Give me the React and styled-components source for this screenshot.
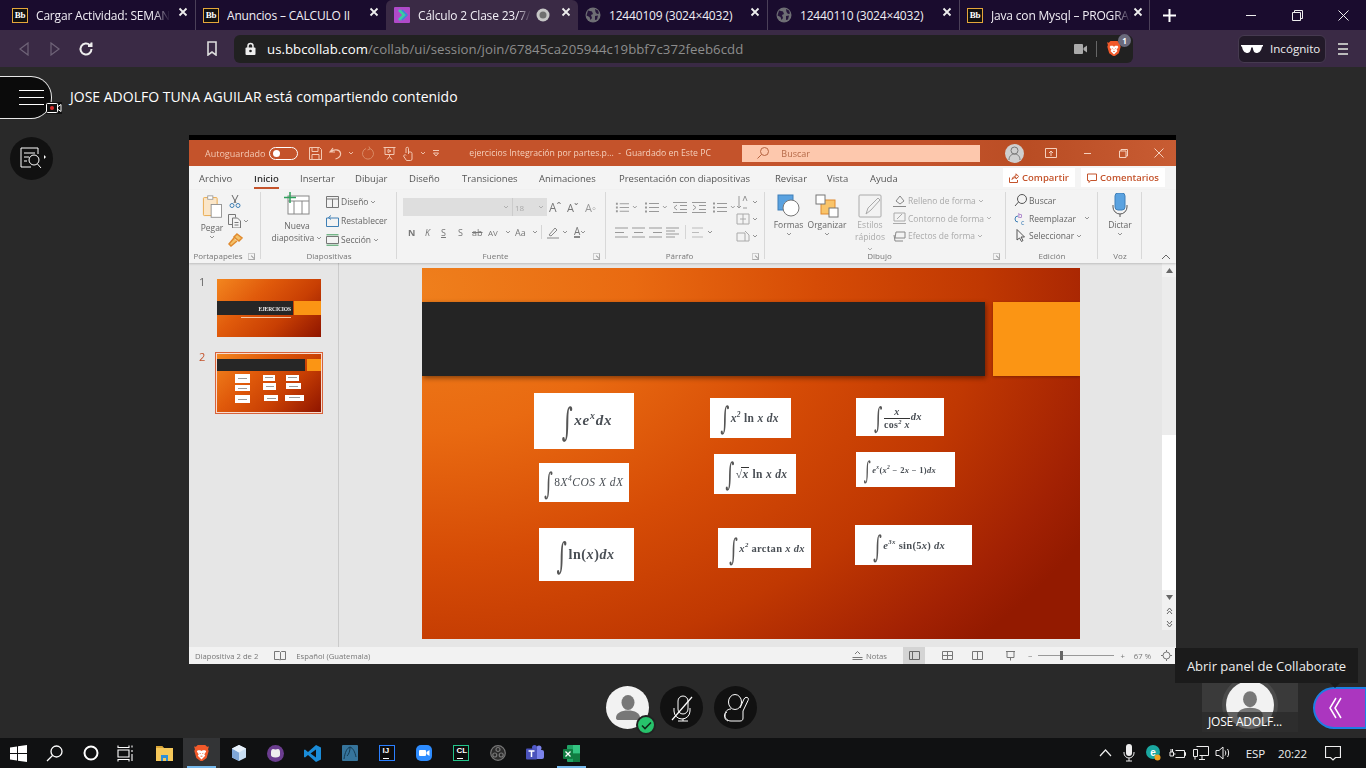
import React from 'react';
import styled, { createGlobalStyle } from 'styled-components';

const Global = createGlobalStyle`
  html, body { margin: 0; padding: 0; background: #292929; overflow: hidden; }
  * { box-sizing: border-box; }
  body { font-family: "Open Sans", "Noto Sans", sans-serif; }
`;

const Page = styled.div`
  width: 1366px; height: 768px; display: flex; flex-direction: column; overflow: hidden; background: #292929;
`;

/* ---------- browser chrome ---------- */
const TabStrip = styled.div`
  height: 30px; display: flex; background: #1a0c2e; color: #fff; flex: none;
`;
const Tab = styled.div`
  width: ${p => p.$w}px; height: 30px; display: flex; align-items: center; padding-left: ${p => p.$pl || 12}px; position: relative;
  background: ${p => p.$active ? '#3a2a45' : 'transparent'};
  border-radius: ${p => p.$active ? '6px 6px 0 0' : '0'};
  font-size: 12px; letter-spacing: -0.18px;
  border-right: ${p => p.$sep ? '1px solid #4b4058' : 'none'};
`;
const TabTitle = styled.span`
  margin-left: 8px; white-space: nowrap; overflow: hidden; width: ${p => p.$tw}px; color: #f1eef5;
  ${p => p.$fade && `mask-image: linear-gradient(90deg, #000 88%, transparent);`}
`;
const TabClose = styled.span`
  position: absolute; right: ${p => p.$r || 7}px; top: 7px; display: flex;
`;
const RecordingDot = styled.span`
  margin-left: 4px; display: flex;
`;
const Bb = styled.span`
  width: 16px; height: 15px; flex: none; background: #111; border: 1.5px solid #e4a63a; color: #fff; font: 700 9px "Liberation Serif", serif;
  display: flex; align-items: center; justify-content: center; letter-spacing: -.3px;
`;
const NewTab = styled.div`width: 38px; display: flex; align-items: center; justify-content: center;`;
const WinCtrls = styled.div`
  margin-left: auto; display: flex; align-items: center; height: 30px;
`;
const WinBtn = styled.div`width: 46px; display: flex; justify-content: center;`;

const Toolbar = styled.div`
  height: 37px; background: #3a2a45; display: flex; align-items: center; flex: none; color: #ddd; padding-left: 4px;
`;
const NavBtn = styled.div`
  width: ${p => p.$w}px; padding-left: ${p => p.$pl || 0}px; display: flex; justify-content: center; flex: none;
`;
const UrlBar = styled.div`
  width: 899px; height: 28px; background: #212121; border-radius: 6px; display: flex; align-items: center; padding-left: 11px; margin-left: 7px; flex: none;
`;
const UrlText = styled.div`
  margin-left: 11px; font-size: 13.2px; color: #8d8d8d; letter-spacing: .05px; flex: 1;
  b { color: #fff; font-weight: 400; }
`;
const UrlEnd = styled.div`
  display: flex; align-items: center; gap: 8px; padding-right: 12px; position: relative;
  i { width: 1px; height: 16px; background: #666; margin: 0 2px 0 1px; }
`;
const ShieldBadge = styled.span`
  position: absolute; right: 2px; top: -7px; width: 13px; height: 13px; border-radius: 50%; background: #6a6a7c; color: #fff; font-size: 8px; display: flex; align-items: center; justify-content: center; font-weight: 700;
`;
const Incognito = styled.div`
  width: 88px; height: 28px; margin-left: 105px; background: #221a29; border: 1px solid #463a50; border-radius: 6px; display: flex; align-items: center; gap: 7px; padding-left: 2px; font-size: 11.6px; color: #eee; flex: none;
`;
const MenuDots = styled.div`
  margin-left: 12px; width: 10px; display: flex; flex-direction: column; gap: 3px;
  i { display: block; height: 2px; background: #bbb; }
`;

/* ---------- collaborate page ---------- */
const Content = styled.div`
  flex: 1; min-height: 0; display: flex; flex-direction: column; padding-top: 9px; color: #fff;
`;
const Header = styled.div`
  height: 43px; display: flex; align-items: center; flex: none;
`;
const SessionMenu = styled.div`
  width: 52px; height: 43px; background: #0b0b0b; border: 1px solid #e8e8e8; border-left: none; border-radius: 0 21px 21px 0; position: relative; display: flex; flex-direction: column; gap: 6px; padding: 13px 0 0 19px;
  i { display: block; width: 25px; height: 1px; background: #fff; }
`;
const RecBadge = styled.span`
  position: absolute; right: -11px; bottom: 4px; display: flex; background: #111;
`;
const Presenter = styled.div`
  margin-left: 18px; padding-bottom: 2px; font-size: 14px; color: #fff; white-space: nowrap;
`;
const Stage = styled.div`
  margin-top: 16px; height: 529px; display: flex; flex: none;
`;
const Rail = styled.div`
  width: 189px; flex: none; padding: 2px 0 0 10px;
`;
const RoundBtn = styled.div`
  width: ${p => p.$s || 43}px; height: ${p => p.$s || 43}px; border-radius: 50%; background: #111; display: flex; align-items: center; justify-content: center; position: relative; flex: none;
`;
const Shared = styled.div`
  width: 987px; height: 529px; background: #000; padding-top: 5px; display: flex; flex-direction: column; filter: blur(.3px); font-family: "Open Sans", sans-serif;
`;

/* ---------- powerpoint title bar ---------- */
const PTitle = styled.div`
  height: 26px; flex: none; background: #c2522a; background-image: linear-gradient(90deg, #c4532b 0 75%, #b94d24 85%, #c85c33); display: flex; align-items: center; color: #f3c8b3; font-size: 9px; padding-left: 16px;
`;
const Toggle = styled.span`
  width: 29px; height: 13px; border-radius: 7px; border: 1.2px solid #fff; margin-left: 4px; position: relative; flex: none; 
  &::after { content: ''; position: absolute; left: 2.5px; top: 2px; width: 7px; height: 7px; background: #fff; border-radius: 50%; }
`;
const QuickTools = styled.div`
  display: flex; align-items: center; gap: 7px; margin-left: 11px; width: 160px; flex: none; color: #f3c8b3;
`;
const QuickIcon = styled.span`
  display: flex; margin-left: ${p => p.$ml || 0}px;
`;
const DocTitle = styled.div`
  width: 273px; flex: none; white-space: pre; color: #f5d0bd; font-size: 8.7px;
`;
const PSearch = styled.div`
  width: 238px; height: 17px; background: #fdc8ad; display: flex; align-items: center; padding-left: 15px; gap: 12px; color: #b56a48; flex: none;
`;
const PAvatar = styled.span`
  width: 19px; height: 19px; border-radius: 50%; background: #cfcfcf; margin-left: 25px; display: flex; align-items: center; justify-content: center; flex: none;
`;
const PWinBtns = styled.div`
  display: flex; align-items: center; margin-left: 9px;
  span { width: 36px; display: flex; justify-content: center; }
`;

/* ---------- ribbon ---------- */
const PTabs = styled.div`
  height: 24px; flex: none; background: #f4f4f4; display: flex; align-items: center; padding-left: 10px; position: relative; font-size: 9.5px; color: #555;
`;
const PTab = styled.span`
  width: ${p => p.$w}px; flex: none; height: 24px; display: flex; align-items: center; position: relative; white-space: nowrap;
  color: ${p => p.$on ? '#333' : '#555'}; font-weight: ${p => p.$on ? 600 : 400};
  ${p => p.$on && `&::after { content: ''; position: absolute; left: 0; width: 25px; bottom: 1px; height: 2px; background: #c4532b; }`}
`;
const Share = styled.span`
  position: absolute; top: 2px; left: ${p => p.$x}px; width: ${p => p.$w}px; height: 19px; background: #fff; color: #c4532b; display: flex; align-items: center; justify-content: center; gap: 3px; font-weight: 600; font-size: 9.5px;
`;
const Ribbon = styled.div`
  height: 73px; flex: none; background: #f3f3f3; display: flex; box-shadow: 0 1px 2px rgba(0,0,0,.18); position: relative; z-index: 1; color: #666; font-size: 8.5px;
`;
const Group = styled.div`
  width: ${p => p.$w}px; flex: none; position: relative; padding-top: 2px; 
  &::after { content: ''; position: absolute; right: 0; top: 2px; bottom: 4px; width: 1px; background: ${p => p.$nosep ? 'transparent' : '#d8d8d8'}; }
`;
const GroupBody = styled.div`
  display: flex; height: 56px; padding-left: ${p => p.$pl || 0}px; gap: ${p => p.$gap || 0}px;
`;
const GroupLabel = styled.div`
  text-align: center; font-size: 8px; color: #777; line-height: 12px; position: absolute; bottom: 1px; left: 0; right: ${p => p.$pr || 0}px;
`;
const Launcher = styled.span`
  position: absolute; right: 6px; bottom: 3px; width: 7px; height: 7px; border: 1px solid #aaa; border-top-color: #ccc; border-left-color: #ccc;
  &::after { content: ''; position: absolute; right: 0; bottom: 0; width: 4px; height: 1px; background: #999; transform: rotate(45deg); transform-origin: right; }
`;
const BigBtn = styled.div`
  width: ${p => p.$w}px; flex: none; display: flex; flex-direction: column; align-items: center; text-align: center; line-height: 12px; font-size: 8.5px; margin-left: ${p => p.$ml || 0}px; color: ${p => p.$dim ? '#aaa' : '#666'};
  > svg { margin-bottom: 3px; flex: none; }
`;
const Rows = styled.div`
  display: flex; flex-direction: column; justify-content: space-between; padding-top: ${p => p.$pt || 0}px; margin-left: ${p => p.$ml || 0}px; height: ${p => p.$h || 56}px;
`;
const RowItem = styled.div`
  display: flex; align-items: center; gap: 2px; height: 17px; white-space: nowrap; color: ${p => p.$dim ? '#aaa' : '#666'}; font-size: 8.5px;
`;
const FontInput = styled.span`
  height: 18px; background: #dedede; display: flex; align-items: center; justify-content: flex-end; width: ${p => p.$w}px; color: #aaa; padding-right: 3px; font-size: 8px;
`;
const Glyph = styled.span`
  color: ${p => p.$c || '#777'}; font-weight: ${p => p.$b ? 700 : 400}; width: ${p => p.$w ? `${p.$w}px` : 'auto'}; margin-left: ${p => p.$ml || 0}px; flex: none;
  font-style: ${p => p.$i ? 'italic' : 'normal'}; text-decoration: ${p => p.$u ? 'underline' : p.$s ? 'line-through' : 'none'}; font-size: ${p => p.$fs || 10}px; display: inline-flex; align-items: center;
`;
const FontRow = styled.div`
  display: flex; align-items: center; gap: ${p => p.$gap ?? 8}px; height: 18px; margin-top: ${p => p.$mt || 0}px; padding-left: ${p => p.$pl || 0}px;
`;
const Spaced = styled.span`
  margin-left: ${p => p.$ml || 0}px; display: flex;
`;
const VSep = styled.span`
  width: 1px; height: 14px; background: #d5d5d5; margin: ${p => p.$m};
`;
const ParaCol = styled.div`
  width: 121px; flex: none; display: flex; flex-direction: column;
`;
const Collapse = styled.div`
  position: absolute; right: 5px; bottom: 1px;
`;

/* ---------- editor ---------- */
const Editor = styled.div`
  flex: 1; min-height: 0; background: #e6e6e6; display: flex;
`;
const ThumbPane = styled.div`
  width: 150px; flex: none; border-right: 1px solid #cbcbcb; padding: 14px 0 0 10px; display: flex; flex-direction: column; gap: 13px;
`;
const ThumbRow = styled.div`
  display: flex; font-size: 11px; color: ${p => p.$on ? '#c4532b' : '#666'}; gap: 8px;
  > span { width: 8px; margin-top: -3px; }
`;
const ThumbFrame = styled.div`
  width: 108px; height: 62px; padding: 1px;
  border: 1px solid ${p => p.$on ? '#d8623a' : 'transparent'};
  background: ${p => p.$on ? '#f7dbcf' : 'transparent'};
`;
const ThumbSlide = styled.div`
  width: 104px; height: 58px; position: relative; overflow: hidden; display: block;
  background: linear-gradient(135deg, #f3861f 0%, #e05a0b 35%, #c83f03 65%, #8f1500 100%);
`;
const ThumbBar = styled.div`
  position: absolute; left: 0; top: ${p => p.$y}px; height: ${p => p.$h}px; width: ${p => p.$w}px; background: #262626; color: #eee; font: 700 5.5px "Liberation Serif", serif; text-align: right; padding: 5px 2px 0 0; letter-spacing: -.1px; white-space: nowrap;
`;
const ThumbAccent = styled.div`
  position: absolute; right: 0; top: ${p => p.$y}px; height: ${p => p.$h}px; width: ${p => p.$w}px; background: #fb9514;
`;
const ThumbSub = styled.div`
  position: absolute; left: 24px; top: 38px; width: 50px; height: 1px; background: #f5c5a0;
`;
const MiniCard = styled.div`
  position: absolute; left: ${p => p.$x}px; top: ${p => p.$y}px; width: ${p => p.$w}px; height: ${p => p.$h}px; background: #fff;
  &::after { content: ''; position: absolute; left: 20%; right: 20%; top: 45%; height: 1px; background: #9a9a9a; }
`;
const SlideArea = styled.div`
  flex: 1; min-width: 0; padding: 5px 0 0 83px;
`;
const Slide = styled.div`
  width: 658px; height: 371px; position: relative; overflow: hidden;
  background: radial-gradient(ellipse 115% 140% at 0% 5%, #ef7f1c 0%, #e96a11 28%, #d64c06 52%, #c03802 74%, #a22103 92%, #931a00 100%);
`;
const DarkBar = styled.div`
  position: absolute; left: 0; top: 34px; width: 563px; height: 74px; background: #242424; box-shadow: 1px 2px 5px rgba(0,0,0,.45);
`;
const Accent = styled.div`
  position: absolute; right: 0; top: 34px; width: 87px; height: 74px; background: #fb9514; box-shadow: 0 1px 3px rgba(0,0,0,.3);
`;
const Card = styled.div`
  position: absolute; left: ${p => p.$x}px; top: ${p => p.$y}px; width: ${p => p.$w}px; height: ${p => p.$h}px; background: #fff;
  display: flex; align-items: center; padding: 2px 0 0 ${p => p.$pl}px; color: #4a4f55;
`;
const Formula = styled.span`
  display: block; font: italic ${p => p.$wt || 700} ${p => p.$fs}px "Liberation Serif", serif; white-space: pre; letter-spacing: ${p => p.$ls ?? .3}px;
  sup { font-size: .65em; line-height: 0; vertical-align: super; }
`;
const Int = styled.span`
  display: inline-block; vertical-align: middle; font: 400 ${p => p.$s}px "DejaVu Serif", serif; line-height: 1; width: ${p => p.$s * .42}px; margin-right: ${p => p.$mr ?? 1}px; transform: scale(.62, 1.12); color: #555;
`;
const Frac = styled.span`
  display: inline-flex; flex-direction: column; align-items: center; vertical-align: middle; font-size: 10px; line-height: 11px; margin-right: 1px;
  span:first-child { border-bottom: 1px solid #333; width: 100%; text-align: center; padding-bottom: 1px; }
`;
const Root = styled.span`
  border-top: 1px solid #333; margin-left: -1px; padding: 0 1px; line-height: 1;
`;
const R = styled.em`font-style: normal;`;

const ScrollCol = styled.div`
  width: 14px; flex: none; background: #f1f1f1; display: flex; flex-direction: column; align-items: center; margin-bottom: 17px;
`;
const ScrollArrow = styled.span`
  height: ${p => p.$h || 12}px; display: flex; align-items: center; justify-content: center; flex: none;
`;
const ScrollTrack = styled.div`
  flex: 1; width: 100%; background: linear-gradient(#ececec 0 158px, #fff 158px);
`;
const StatusBar = styled.div`
  height: 17px; flex: none; background: #f2f2f2; display: flex; align-items: center; padding-left: 6px; font-size: 7.7px; color: #777;
`;
const StatusRight = styled.div`
  margin-left: auto; display: flex; align-items: center; padding-right: 4px; height: 17px;
`;
const ViewBtn = styled.span`
  width: ${p => p.$w || 31}px; height: 17px; display: flex; align-items: center; justify-content: center; flex: none; margin-left: ${p => p.$ml || 0}px;
  background: ${p => p.$on ? '#d4d4d4' : 'transparent'};
`;
const ZoomSlider = styled.span`
  width: 76px; height: 9px; position: relative; margin: 0 6px; display: block;
  &::before { content: ''; position: absolute; left: 0; right: 0; top: 4px; height: 1px; background: #999; }
  &::after { content: ''; position: absolute; left: 22px; top: 0; width: 3px; height: 9px; background: #666; }
`;

/* ---------- dock ---------- */
const Dock = styled.div`
  flex: 1; position: relative; display: flex;
`;
const DockCenter = styled.div`
  margin-left: 606px; margin-top: 22px; display: flex; gap: 11px; height: 43px;
`;
const AvatarBtn = styled.div`
  width: 43px; height: 43px; border-radius: 50%; background: #f2f2f2; position: relative; display: flex; align-items: center; justify-content: center;
`;
const Check = styled.span`
  position: absolute; right: -7px; bottom: -6px; width: 20px; height: 20px; border-radius: 50%; background: #27c26b; border: 2px solid #222; display: flex; align-items: center; justify-content: center;
`;
const DockRight = styled.div`
  margin-left: auto; display: flex; align-items: flex-start; gap: 15px; padding-top: 19px; position: relative;
`;
const Tile = styled.div`
  width: 96px; height: 49px; background: #3a3a3a; position: relative; overflow: hidden; display: flex; justify-content: center;
`;
const TileAvatar = styled.div`
  width: 48px; height: 48px; margin-top: -2px; border-radius: 50%; background: #f2f2f2; box-shadow: 0 0 0 4px #4a4a4a; display: flex; justify-content: center; align-items: center;
`;
const TileName = styled.div`
  position: absolute; left: 0; right: 0; bottom: 0; height: 20px; background: rgba(40,40,40,.72); color: #fff; font-size: 12px; letter-spacing: -.2px; padding-left: 6px; line-height: 20px; white-space: nowrap;
`;
const PanelBtn = styled.div`
  width: 53px; height: 42px; margin-top: 4px; background: #ab36bf; border: 2px solid #1c7fe3; border-right-width: 1px; border-radius: 21px 0 0 21px; display: flex; align-items: center; padding-left: 14px;
`;
const Tooltip = styled.div`
  position: absolute; right: 8px; top: -16px; width: 183px; height: 35px; background: #1b1b1b; color: #eee; font-size: 13px; display: flex; align-items: center; justify-content: center;
  &::after { content: ''; position: absolute; right: 17px; bottom: -5px; width: 0; height: 0; border-left: 6px solid transparent; border-right: 6px solid transparent; border-top: 6px solid #1b1b1b; }
`;

/* ---------- taskbar ---------- */
const Taskbar = styled.div`
  height: 30px; background: #101112; display: flex; align-items: center; flex: none; color: #eee; font-size: 11.5px;
`;
const TaskCell = styled.div`
  width: ${p => p.$w || 37}px; height: 30px; flex: none; display: flex; align-items: center; justify-content: center; position: relative;
  background: ${p => p.$on ? '#333436' : 'transparent'};
  ${p => p.$run && `&::after { content: ''; position: absolute; left: 4px; right: 4px; bottom: 0; height: 2px; background: #76b9ed; }`}
`;
const TaskGap = styled.span`width: 3px; flex: none;`;
const Tray = styled.div`
  margin-left: auto; display: flex; align-items: center; height: 30px; padding-right: 18px;
`;
const TrayCell = styled.div`
  width: ${p => p.$w}px; padding-left: ${p => p.$pl || 0}px; flex: none; display: flex; justify-content: center; align-items: center; white-space: nowrap; letter-spacing: -.1px;
`;
const SquareApp = styled.span`
  width: 16px; height: 16px; background: #0c0c0c; border: 1px solid ${p => p.$c}; color: #fff; font: 700 8px "Liberation Sans", sans-serif; display: flex; flex-direction: column; justify-content: space-between; padding: 1px 0 1px 3px; line-height: 8px;
  i { display: block; width: 6px; height: 1px; background: #fff; }
`;

/* ---------- icons ---------- */
const S = ({ w = 16, h = 16, vb, c = 'currentColor', sw = 1, fill = 'none', children }) => (
  <svg width={w} height={h} viewBox={vb || `0 0 ${w} ${h}`} fill={fill} stroke={c} strokeWidth={sw}>{children}</svg>
);
const Close = ({ c = '#eee', s = 10, sw = 1.8 }) => <S w={s} h={s} vb="0 0 10 10" c={c} sw={sw}><path d="M1.5 1.5l7 7M8.5 1.5l-7 7" /></S>;
const Globe = () => (
  <svg width="16" height="16" viewBox="0 0 16 16"><circle cx="8" cy="8" r="7.5" fill="#6e6e74" /><path d="M3 3.5l4 1 1 2.5-2 1 1 3-1.5 2-1-3-3-1.5zM10 2l3 1.5 1 3-2 .5-1.5-2zM10 9l3-.5-1 4-2 .5z" fill="#26163a" /></svg>
);
const Recording = () => (
  <svg width="16" height="16" viewBox="0 0 16 16"><circle cx="8" cy="8" r="6.5" fill="#c6c6c6" /><circle cx="8" cy="8" r="3.5" fill="#6f6f6f" /></svg>
);
const PlayFav = () => (
  <svg width="16" height="16" viewBox="0 0 16 16"><rect width="16" height="16" rx="1" fill="#b04ac9" /><path d="M5 3l5 5-5 5" fill="none" stroke="#35d0a0" strokeWidth="2.5" /><path d="M8 3l5 5-5 5" fill="none" stroke="#2f90d8" strokeWidth="1.5" /></svg>
);
const Brave = ({ s = 16 }) => (
  <svg width={s} height={s * 1.12} viewBox="0 0 16 18">
    <path d="M8 0h4l2 2 2-.5-1 3 .7 2L13.5 14 8 18 2.5 14 .3 6.500l.7-2-1-3L2 2l2-2z" fill="#f1592a" />
    <path d="M4 5.500h2.500L8 6.500 9.500 5.500H12l1 1.500-2 3 1 1.500-4 4-4-4 1-1.500-2-3z" fill="#fff" />
    <path d="M6 8.500l1 1M10 8.500l-1 1M7 12h2" stroke="#f1592a" strokeWidth="1" fill="none" />
  </svg>
);
const Chev = ({ c = '#888', s = 6 }) => <S w={s} h={s} vb="0 0 6 6" c={c} sw={.9}><path d="M1 2l2 2 2-2" /></S>;

const Lines = ({ n = 3, w = 13, c = '#999', align = 'l' }) => (
  <svg width={w} height="11" viewBox={`0 0 ${w} 11`} stroke={c} strokeWidth="1" fill="none">
    {Array.from({ length: n }).map((_, i) => {
      const y = 1 + i * (9 / Math.max(n - 1, 1));
      const short = i % 2 === 1;
      const l = align === 'r' && short ? 4 : align === 'c' && short ? 2 : 0;
      const r = align === 'l' && short ? w - 4 : align === 'c' && short ? w - 2 : w;
      return <path key={i} d={`M${l} ${y}H${r}`} />;
    })}
  </svg>
);
const Bullets = ({ c = '#999' }) => (
  <svg width="15" height="11" viewBox="0 0 15 11" stroke={c} fill="none"><path d="M5 1.500h10M5 5.500h10M5 9.500h10" /><path d="M1 1.500h2M1 5.500h2M1 9.500h2" strokeWidth="2" /></svg>
);
const Indent = ({ flip }) => (
  <svg width="14" height="11" viewBox="0 0 14 11" stroke="#999" fill="none"><path d="M0 .5h14M0 10.500h14M7 3.500h7M7 7.500h7" />{flip ? <path d="M1 3l3 2.500L1 8" /> : <path d="M4 3L1 5.500 4 8" />}</svg>
);
const DoubleArrow = ({ up }) => (
  <S w={7} h={8} c="#666"><path d={up ? 'M1 4l2.500-3L6 4M1 7l2.500-3L6 7' : 'M1 1l2.500 3L6 1M1 4l2.500 3L6 4'} /></S>
);
const SingleArrow = ({ up }) => (
  <svg width="7" height="5" viewBox="0 0 7 5" fill="#666"><path d={up ? 'M3.500 0L7 5H0z' : 'M3.500 5L7 0H0z'} /></svg>
);

const cards = [
  { x: 112, y: 125, w: 100, h: 56, pl: 25, fs: 15, ls: .8, s: 34, body: <>xe<sup>x</sup>dx</> },
  { x: 288, y: 130, w: 81, h: 40, pl: 8, fs: 11.500, s: 28, body: <>x<sup>2</sup><R> ln </R>x dx</> },
  { x: 434, y: 130, w: 88, h: 38, pl: 16, fs: 10.500, s: 26, body: <><Frac><span>x</span><span><R>cos</R><sup>2</sup> x</span></Frac>dx</> },
  { x: 117, y: 195, w: 90, h: 39, pl: 3, fs: 11.500, s: 27, wt: 400, ls: .5, body: <><R>8</R>X<sup>4</sup>COS X dX</> },
  { x: 292, y: 186, w: 82, h: 40, pl: 9, fs: 11.500, s: 28, body: <><R style={{ fontWeight: 400 }}>√</R><Root>x</Root><R> ln </R>x dx</> },
  { x: 434, y: 184, w: 99, h: 35, pl: 6, fs: 8.500, s: 22, body: <>e<sup>x</sup><R>(</R>x<sup>2</sup><R> − 2</R>x<R> − 1)</R>dx</> },
  { x: 117, y: 260, w: 95, h: 53, pl: 15, fs: 14, ls: .6, s: 32, body: <><R>ln(</R>x<R>)</R>dx</> },
  { x: 296, y: 260, w: 93, h: 40, pl: 9, fs: 10.500, s: 27, body: <>x<sup>2</sup><R> arctan </R>x dx</> },
  { x: 433, y: 257, w: 117, h: 40, pl: 16, fs: 10.500, s: 27, body: <>e<sup>3x</sup><R> sin(5</R>x<R>)</R> dx</> },
];

const Thumb = ({ children, bar, accent }) => (
  <ThumbSlide>
    <ThumbBar $y={bar.y} $h={bar.h} $w={bar.w}>{bar.t}</ThumbBar>
    <ThumbAccent $y={accent.y} $h={accent.h} $w={accent.w} />
    {children}
  </ThumbSlide>
);

const Person = ({ s = 30, c = '#777' }) => (
  <svg width={s} height={s} viewBox="0 0 30 30"><ellipse cx="15" cy="9.500" rx="6.500" ry="7.500" fill={c} /><path d="M3 25c0-5 5-7.500 12-7.500S27 20 27 25c0 1.500-1 2-2.500 2h-19C4 27 3 26.500 3 25z" fill={c} /></svg>
);

export default function App() {
  return (
    <Page>
      <Global />
      <TabStrip>
        <Tab $w={196} $sep><Bb>Bb</Bb><TabTitle $tw={134} $fade>Cargar Actividad: SEMANA</TabTitle><TabClose><Close /></TabClose></Tab>
        <Tab $w={190} $pl={7}><Bb>Bb</Bb><TabTitle $tw={130}>Anuncios – CALCULO II</TabTitle><TabClose><Close /></TabClose></Tab>
        <Tab $w={192} $active $pl={8}><PlayFav /><TabTitle $tw={113} $fade>Cálculo 2 Clase 23/7/2020</TabTitle><RecordingDot><Recording /></RecordingDot><TabClose $r={7}><Close /></TabClose></Tab>
        <Tab $w={190} $sep $pl={7}><Globe /><TabTitle $tw={135}>12440109 (3024×4032)</TabTitle><TabClose><Close /></TabClose></Tab>
        <Tab $w={192} $sep $pl={8}><Globe /><TabTitle $tw={135}>12440110 (3024×4032)</TabTitle><TabClose><Close /></TabClose></Tab>
        <Tab $w={190} $sep $pl={7}><Bb>Bb</Bb><TabTitle $tw={140} $fade>Java con Mysql – PROGRAMA</TabTitle><TabClose $r={6}><Close /></TabClose></Tab>
        <NewTab><S w={13} h={13} c="#fff" sw={2}><path d="M6.500 0v13M0 6.500h13" /></S></NewTab>
        <WinCtrls>
          <WinBtn><S w={10} h={10} c="#eee"><path d="M0 5.500h10" /></S></WinBtn>
          <WinBtn><S w={11} h={11} c="#eee"><path d="M2.500 2.500v-2h8v8h-2M.5 2.500h8v8h-8z" /></S></WinBtn>
          <WinBtn><S w={11} h={11} c="#eee"><path d="M.5.500l10 10M10.500.500l-10 10" /></S></WinBtn>
        </WinCtrls>
      </TabStrip>

      <Toolbar>
        <NavBtn $w={38}><S w={11} h={14} c="#6f6478" sw={1.2}><path d="M10 1L2 7l8 6z" /></S></NavBtn>
        <NavBtn $w={26}><S w={11} h={14} c="#6f6478" sw={1.2}><path d="M1 1l8 6-8 6z" /></S></NavBtn>
        <NavBtn $w={36}><S w={16} h={16} c="#eee" sw={2}><path d="M13.500 8a5.500 5.500 0 1 1-1.600-3.900" /><path d="M13.500 1.500v3.500H10" fill="#eee" /></S></NavBtn>
        <NavBtn $w={123} $pl={93}><S w={12} h={15} c="#ddd" sw={1.6}><path d="M2 1h8v13l-4-3-4 3z" /></S></NavBtn>
        <UrlBar>
          <svg width="11" height="13" viewBox="0 0 11 13"><path d="M3 6V4a2.500 2.500 0 0 1 5 0v2" fill="none" stroke="#eee" strokeWidth="1.500" /><rect x=".5" y="5.500" width="10" height="7.500" rx="1" fill="#eee" /><circle cx="5.500" cy="9" r="1.300" fill="#212121" /></svg>
          <UrlText><b>us.bbcollab.com</b>/collab/ui/session/join/67845ca205944c19bbf7c372feeb6cdd</UrlText>
          <UrlEnd>
            <svg width="13" height="10" viewBox="0 0 13 10" fill="#aaa"><rect width="9" height="10" rx="1" /><path d="M9.500 4L13 1.500v7L9.500 6z" /></svg>
            <i />
            <Brave s={14} />
            <ShieldBadge>1</ShieldBadge>
          </UrlEnd>
        </UrlBar>
        <Incognito>
          <svg width="22" height="10" viewBox="0 0 22 10" fill="#fff"><path d="M0 1h22v1.500h-1C20.500 7 18 9 15.500 9 13 9 12 6 11.800 3.500h-1.600C10 6 9 9 6.500 9 4 9 1.500 7 1 2.500H0z" /></svg>
          <span>Incógnito</span>
        </Incognito>
        <MenuDots><i /><i /><i /></MenuDots>
      </Toolbar>

      <Content>
        <Header>
          <SessionMenu>
            <i /><i /><i />
            <RecBadge>
              <svg width="16" height="12" viewBox="0 0 16 12" fill="none" stroke="#fff"><rect x=".5" y="1.500" width="11" height="9" rx="1" /><path d="M12 4.500l3-2v7l-3-2" /><circle cx="6" cy="6" r="2" fill="#e02b2b" stroke="none" /></svg>
            </RecBadge>
          </SessionMenu>
          <Presenter>JOSE ADOLFO TUNA AGUILAR está compartiendo contenido</Presenter>
        </Header>

        <Stage>
          <Rail>
            <RoundBtn>
              <svg width="28" height="28" viewBox="0 0 28 28" fill="none" stroke="#fff" strokeWidth="1"><path d="M20 9V3H3v19h10" /><path d="M6 8h11M6 12h5M6 16h3" /><circle cx="16" cy="15" r="5" /><path d="M19.500 19l3.500 4" /><path d="M26 10l2 2-2 2z" fill="#fff" stroke="none" /></svg>
            </RoundBtn>
          </Rail>
          <Shared>
            <PTitle>
              <span>Autoguardado</span>
              <Toggle />
              <QuickTools>
                <S w={13} h={13} c="#f3c8b3"><path d="M.5.500h10l2 2v10H.5zM3 .5v4h6v-4M3 12.500v-5h7v5" /></S>
                <S w={15} h={13} c="#f3c8b3" sw={1.2}><path d="M4 1L1 5h5M1.500 5c3-3 9-3 10 1 .6 3-2 5-5 6" /></S>
                <QuickIcon $ml={-3}><Chev c="#f3c8b3" /></QuickIcon>
                <QuickIcon $ml={-1}><S w={14} h={14} c="#d98a66" sw={1}><path d="M10 2.500a5.500 5.500 0 1 1-4 0M9 .5l1 2.500-2.500 1" /></S></QuickIcon>
                <QuickIcon $ml={2}><S w={13} h={14} c="#f3c8b3"><path d="M.5 1.500h12M2 1.500v7h9v-7M6.500 8.500v2M4 13.500l2.500-3 2.500 3" /><path d="M5 3.500l3 1.500-3 1.500z" /></S></QuickIcon>
                <QuickIcon $ml={-1}><S w={11} h={15} c="#f3c8b3"><path d="M4 7V2.500a1.200 1.200 0 0 1 2.500 0V8M6.500 6h2a1.500 1.500 0 0 1 1.500 1.500V13a1.500 1.500 0 0 1-1.500 1.500h-4L1.500 10 3 8.500 4 9.500" /></S></QuickIcon>
                <Chev c="#f3c8b3" />
                <QuickIcon $ml={-1}><S w={8} h={8} c="#f3c8b3"><path d="M1 1.500h6M1.500 4l2.500 3 2.500-3z" /></S></QuickIcon>
              </QuickTools>
              <DocTitle>ejercicios Integración por partes.p...  -  Guardado en Este PC</DocTitle>
              <PSearch>
                <S w={12} h={12} c="#b5623f"><circle cx="7.500" cy="4.500" r="4" /><path d="M4.500 7.500L.5 11.500" /></S>
                <span>Buscar</span>
              </PSearch>
              <PAvatar><S w={13} h={14} c="#777"><circle cx="6.500" cy="4.500" r="3.500" /><path d="M1 14c0-4 2.500-6 5.500-6s5.500 2 5.500 6" /></S></PAvatar>
              <PWinBtns>
                <span><S w={12} h={10} c="#f5d0bd"><path d="M.5.500h11v9H.5zM6 8V3M4 5l2-2 2 2" /></S></span>
                <span><S w={9} h={9} c="#f5d0bd"><path d="M1 4.500h7" /></S></span>
                <span><S w={9} h={9} c="#f5d0bd"><path d="M2 2V.5h6.500V7H7M.5 2h6.500v6.500H.5z" /></S></span>
                <span><S w={10} h={10} c="#f5d0bd"><path d="M.5.500l9 9M9.500.500l-9 9" /></S></span>
              </PWinBtns>
            </PTitle>

            <PTabs>
              <PTab $w={55}>Archivo</PTab>
              <PTab $w={46} $on>Inicio</PTab>
              <PTab $w={55}>Insertar</PTab>
              <PTab $w={54}>Dibujar</PTab>
              <PTab $w={53}>Diseño</PTab>
              <PTab $w={77}>Transiciones</PTab>
              <PTab $w={80}>Animaciones</PTab>
              <PTab $w={156}>Presentación con diapositivas</PTab>
              <PTab $w={52}>Revisar</PTab>
              <PTab $w={43}>Vista</PTab>
              <PTab $w={40}>Ayuda</PTab>
              <Share $x={814} $w={72}><S w={10} h={10} c="#c4532b"><path d="M.5 4.500v5h8V7M3 6.500c.5-2.500 2.500-3.500 4-3.500V.8L9.700 3.500 7 6V4.500c-1.500 0-3 .500-4 2z" /></S>Compartir</Share>
              <Share $x={892} $w={84}><S w={10} h={10} c="#c4532b"><path d="M.5 1h9v6.500h-6L2 9.500v-2H.5z" /></S>Comentarios</Share>
            </PTabs>

            <Ribbon>
              <Group $w={72}>
                <GroupBody $pl={10}>
                  <BigBtn $w={26}>
                    <svg width="22" height="24" viewBox="0 0 24 28" fill="none" style={{ marginTop: 3 }}><rect x="2" y="3" width="16" height="21" rx="1" fill="#fbe6c8" stroke="#e6a33e" /><rect x="7" y="1" width="6" height="4" fill="#fff" stroke="#999" /><rect x="11" y="11" width="12" height="15" fill="#fff" stroke="#8a8a8a" /></svg>
                    <span>Pegar</span>
                    <Chev />
                  </BigBtn>
                  <Rows $ml={3} $h={55} $pt={2}>
                    <S w={14} h={14} c="#3e7fb5"><path d="M4 1l4 8M10 1L6 9" stroke="#666" /><circle cx="4" cy="11.500" r="2" /><circle cx="10" cy="11.500" r="2" /></S>
                    <RowItem><S w={13} h={14} c="#777"><path d="M.5.5h7v3M.5.5v10h3.500M4.500 4h5l3 3v7h-8zM6.500 8.500h4M6.500 11h4" /></S><Chev /></RowItem>
                    <S w={15} h={14} c="#e08a2f" sw={1.500}><path d="M9 1l5 4-3 3-5-4zM6 5L1 11l2 2 6-5" fill="#f3c26a" /></S>
                  </Rows>
                </GroupBody>
                <GroupLabel $pr={14}>Portapapeles</GroupLabel>
                <Launcher />
              </Group>

              <Group $w={136}>
                <GroupBody $pl={7}>
                  <BigBtn $w={58}>
                    <svg width="26" height="24" viewBox="0 0 26 24" fill="none" stroke="#888"><rect x="4" y="4" width="21" height="18" fill="#fff" /><path d="M4 9h21M10 9v13M18 9v13" /><path d="M6 0v11M0 5.500h12" stroke="#2fa05c" strokeWidth="1.500" /></svg>
                    <span style={{ marginTop: 1 }}>Nueva</span>
                    <span>diapositiva <Chev /></span>
                  </BigBtn>
                  <Rows $pt={1}>
                    <RowItem><S w={13} h={12} c="#777"><path d="M.5.5h12v11H.5zM.5 3h12M6.500 3v8.500" /></S><span>Diseño</span><Chev /></RowItem>
                    <RowItem><S w={13} h={12} c="#3e7fb5"><path d="M.5 3h12v8.500H.5zM5 .5L2.500 2.500 5 4.500" /></S><span>Restablecer</span></RowItem>
                    <RowItem><S w={13} h={12} c="#777"><path d="M.5 2.500h12v7H.5z" /><path d="M.5.8h12M.5 11.200h12" stroke="#3e9a5a" /></S><span>Sección</span><Chev /></RowItem>
                  </Rows>
                </GroupBody>
                <GroupLabel>Diapositivas</GroupLabel>
              </Group>

              <Group $w={209}>
                <GroupBody style={{ flexDirection: 'column', paddingLeft: 6 }}>
                  <FontRow $gap={0} $mt={6}>
                    <FontInput $w={109}><Chev c="#aaa" /></FontInput>
                    <FontInput $w={35} style={{ borderLeft: '1px solid #ccc', justifyContent: 'space-between', paddingLeft: 2 }}>18<Chev c="#aaa" /></FontInput>
                    <Glyph $fs={12} $ml={2} $w={18}>Aˆ</Glyph>
                    <Glyph $fs={11} $w={18}>Aˇ</Glyph>
                    <Glyph $fs={11} $c="#999">A◦</Glyph>
                  </FontRow>
                  <FontRow $gap={0} $mt={7} $pl={5}>
                    <Glyph $b $fs={9} $w={17}>N</Glyph>
                    <Glyph $i $fs={9} $w={16}>K</Glyph>
                    <Glyph $u $fs={9} $w={17}>S</Glyph>
                    <Glyph $fs={9} $w={14}>S</Glyph>
                    <Glyph $s $fs={9} $w={16}>ab</Glyph>
                    <Glyph $fs={8} $w={17}>AV</Glyph>
                    <Chev />
                    <Glyph $fs={9} $w={17} $ml={4}>Aa</Glyph>
                    <Chev />
                    <VSep $m="0 4px 0 3px" />
                    <S w={14} h={13} c="#888"><path d="M3 9l6-7 2 2-6 6zM1 12h12" /></S>
                    <Spaced $ml={2}><Chev /></Spaced>
                    <Glyph $fs={10} $ml={6} style={{ borderBottom: '2px solid #888', lineHeight: '10px' }}>A</Glyph>
                    <Chev />
                  </FontRow>
                </GroupBody>
                <GroupLabel $pr={12}>Fuente</GroupLabel>
                <Launcher />
              </Group>

              <Group $w={159}>
                <GroupBody $pl={9}>
                  <ParaCol>
                    <FontRow $gap={3} $mt={6}>
                      <Bullets /><Chev />
                      <Spaced $ml={3}><Bullets /></Spaced><Chev />
                      <Spaced $ml={3}><Indent /></Spaced>
                      <Spaced $ml={2}><Indent flip /></Spaced>
                      <Spaced $ml={3}><Bullets /></Spaced><Chev />
                    </FontRow>
                    <FontRow $gap={4} $mt={7}>
                      <Lines /><Lines align="c" /><Lines align="r" /><Lines n={4} />
                      <VSep $m="0 2px" />
                      <Lines w={11} c="#bbb" /><Chev />
                    </FontRow>
                  </ParaCol>
                  <Rows $h={52} $pt={1}>
                    <RowItem><S w={14} h={14} c="#999"><path d="M3 1v12M1 11l2 2 2-2" /><path d="M9 1l-2 5M9 1l2 5M7 13h4" /></S><Chev /></RowItem>
                    <RowItem><S w={14} h={13} c="#aaa"><path d="M1 2h12v10H1zM7 2v10M4 7h6" /></S><Chev /></RowItem>
                    <RowItem><S w={14} h={12} c="#aaa"><path d="M1 3h8v8H1zM9 1l4 4v6H9" /></S><Chev /></RowItem>
                  </Rows>
                </GroupBody>
                <GroupLabel $pr={12}>Párrafo</GroupLabel>
                <Launcher />
              </Group>

              <Group $w={241}>
                <GroupBody $pl={7}>
                  <BigBtn $w={33}>
                    <svg width="24" height="24" viewBox="0 0 24 24" style={{ marginTop: 2, marginBottom: 1 }}><rect x="1" y="1" width="15" height="15" fill="#5aa2e0" stroke="#3f7fb8" /><circle cx="14" cy="14" r="8" fill="#fff" stroke="#777" /></svg>
                    <span>Formas</span>
                    <Chev />
                  </BigBtn>
                  <BigBtn $w={40} $ml={2}>
                    <svg width="24" height="24" viewBox="0 0 24 24" style={{ marginTop: 2, marginBottom: 1 }}><rect x="6" y="6" width="14" height="14" fill="#f9c46a" stroke="#e08a2f" /><rect x="1" y="1" width="9" height="9" fill="#fff" stroke="#777" /><rect x="14" y="14" width="9" height="9" fill="#fff" stroke="#777" /></svg>
                    <span>Organizar</span>
                    <Chev />
                  </BigBtn>
                  <BigBtn $w={34} $ml={6} $dim>
                    <svg width="24" height="24" viewBox="0 0 24 24" fill="none" stroke="#aaa" style={{ marginTop: 2, marginBottom: 1 }}><rect x="1" y="1" width="22" height="22" rx="1" /><path d="M8 20l2-6 10-10 2 2-9 10z" /></svg>
                    <span>Estilos</span>
                    <span>rápidos <Chev c="#aaa" /></span>
                  </BigBtn>
                  <Rows $ml={6} $h={52}>
                    <RowItem $dim><S w={13} h={12} c="#aaa"><path d="M3 6l4-5 4 5-4 3zM0 11.500h13" stroke="#888" /></S><span>Relleno de forma</span><Chev c="#aaa" /></RowItem>
                    <RowItem $dim><S w={13} h={12} c="#aaa"><path d="M1 1h11v8H1zM4 7l5-5M0 11.500h13" /></S><span>Contorno de forma</span><Chev c="#aaa" /></RowItem>
                    <RowItem $dim><S w={13} h={12} c="#888"><path d="M3 2h9v6H2zM1 5l1 6h8" /></S><span>Efectos de forma</span><Chev c="#aaa" /></RowItem>
                  </Rows>
                </GroupBody>
                <GroupLabel $pr={12}>Dibujo</GroupLabel>
                <Launcher />
              </Group>

              <Group $w={92}>
                <GroupBody $pl={8}>
                  <Rows $h={52}>
                    <RowItem><S w={13} h={13} c="#555"><circle cx="8" cy="5" r="4.500" /><path d="M4.500 8L1 12" /></S><span>Buscar</span></RowItem>
                    <RowItem><S w={13} h={13} c="#3e7fb5"><text x="4" y="6" fontSize="7" fill="#8a4fb8" stroke="none">b</text><text x="7" y="13" fontSize="7" fill="#3e7fb5" stroke="none">c</text><path d="M4 4a3 3 0 1 0 0 6" /></S><span>Reemplazar</span><Spaced $ml={6}><Chev /></Spaced></RowItem>
                    <RowItem><S w={13} h={13} c="#555"><path d="M3 .5v10.500l2.500-2 2 3.500 1.500-1-2-3.500h3.500z" /></S><span>Seleccionar</span><Chev /></RowItem>
                  </Rows>
                </GroupBody>
                <GroupLabel>Edición</GroupLabel>
              </Group>

              <Group $w={44}>
                <GroupBody>
                  <BigBtn $w={44}>
                    <svg width="16" height="25" viewBox="0 0 16 25" style={{ marginTop: 1, marginBottom: 1 }}><rect x="3" y="0" width="10" height="17" rx="3" fill="#5aa2e0" stroke="#3f7fb8" /><path d="M1 12v2a7 7 0 0 0 14 0v-2M8 21v3" fill="none" stroke="#555" /></svg>
                    <span>Dictar</span>
                    <Chev />
                  </BigBtn>
                </GroupBody>
                <GroupLabel>Voz</GroupLabel>
              </Group>

              <Collapse><S w={10} h={7} c="#666"><path d="M1 6l4-4 4 4" /></S></Collapse>
            </Ribbon>

            <Editor>
              <ThumbPane>
                <ThumbRow><span>1</span>
                  <ThumbFrame>
                    <Thumb bar={{ y: 22, h: 14, w: 76, t: 'EJERCICIOS' }} accent={{ y: 22, h: 14, w: 27 }}><ThumbSub /></Thumb>
                  </ThumbFrame>
                </ThumbRow>
                <ThumbRow $on><span>2</span>
                  <ThumbFrame $on>
                    <Thumb bar={{ y: 5, h: 12, w: 88, t: '' }} accent={{ y: 5, h: 12, w: 14 }}>
                      {cards.map((c, i) => (
                        <MiniCard key={i} $x={c.x * .158} $y={c.y * .158} $w={c.w * .158} $h={c.h * .158} />
                      ))}
                    </Thumb>
                  </ThumbFrame>
                </ThumbRow>
              </ThumbPane>
              <SlideArea>
                <Slide>
                  <DarkBar />
                  <Accent />
                  {cards.map((c, i) => (
                    <Card key={i} $x={c.x} $y={c.y} $w={c.w} $h={c.h} $pl={c.pl}>
                      <Formula $fs={c.fs} $wt={c.wt} $ls={c.ls}><Int $s={c.s}>∫</Int>{c.body}</Formula>
                    </Card>
                  ))}
                </Slide>
              </SlideArea>
              <ScrollCol>
                <ScrollArrow $h={14}><SingleArrow up /></ScrollArrow>
                <ScrollTrack />
                <ScrollArrow $h={14}><SingleArrow /></ScrollArrow>
                <ScrollArrow $h={13}><DoubleArrow up /></ScrollArrow>
                <ScrollArrow $h={13}><DoubleArrow /></ScrollArrow>
              </ScrollCol>
            </Editor>

            <StatusBar>
              <span>Diapositiva 2 de 2</span>
              <Spaced $ml={16}><S w={12} h={10} c="#777"><path d="M.5.5h5l1 1 1-1h4v8h-5l-.500.700-.500-.700h-5zM6.500 1.500v7" /></S></Spaced>
              <Spaced $ml={10}>Español (Guatemala)</Spaced>
              <StatusRight>
                <S w={11} h={9} c="#777"><path d="M.5 6.500h10M.5 8.500h10M3 3l2.500-2.500L8 3" /></S>
                <Spaced $ml={3} style={{ marginRight: 16 }}>Notas</Spaced>
                <ViewBtn $w={22} $on><S w={11} h={9} c="#666"><path d="M.5.5h10v8H.5zM3.500.5v8" /></S></ViewBtn>
                <ViewBtn $w={30} $ml={7}><S w={11} h={9} c="#777"><path d="M.5.5h10v8H.5zM.5 4.500h10M5.500.5v8" /></S></ViewBtn>
                <ViewBtn $w={30}><S w={11} h={9} c="#777"><path d="M.5.5h10v8H.5zM5.500.5v8" /></S></ViewBtn>
                <ViewBtn $w={36}><S w={9} h={10} c="#777"><path d="M0 .5h9M1 .5v6h7v-6M4.500 6.500v3" /></S></ViewBtn>
                <span>−</span>
                <ZoomSlider />
                <span>+</span>
                <Spaced $ml={9} style={{ marginRight: 10 }}>67 %</Spaced>
                <S w={11} h={11} c="#777"><circle cx="5.500" cy="5.500" r="3.500" /><path d="M5.500 0v2M5.500 9v2M0 5.500h2M9 5.500h2" /></S>
              </StatusRight>
            </StatusBar>
          </Shared>
        </Stage>

        <Dock>
          <DockCenter>
            <AvatarBtn>
              <Person s={30} />
              <Check><S w={11} h={9} c="#0e2a18" sw={1.600}><path d="M1 4.500l3 3 6-6" /></S></Check>
            </AvatarBtn>
            <RoundBtn>
              <svg width="24" height="28" viewBox="0 0 24 28" fill="none" stroke="#fff"><rect x="8" y="2" width="10" height="18" rx="5" /><path d="M4 14v3a8 8 0 0 0 16 0v-3M13 25v2M8 27h10" /><path d="M2 26L22 3" strokeWidth="1.200" /></svg>
            </RoundBtn>
            <RoundBtn>
              <svg width="28" height="30" viewBox="0 0 28 30" fill="none" stroke="#fff"><ellipse cx="13" cy="9" rx="6.500" ry="7.500" /><path d="M18 15l4-9c1-2 3-2 4-1 .6.600.5 1.500 0 2.500L21 18v7c0 2-1 3-3 3H9c-3 0-6-2-6-6 0-4 3-6 6-6" /><path d="M5 19c-3 1-4 7 1 9" /></svg>
            </RoundBtn>
          </DockCenter>
          <DockRight>
            <Tile>
              <TileAvatar><Person s={32} /></TileAvatar>
              <TileName>JOSE ADOLF...</TileName>
            </Tile>
            <PanelBtn>
              <svg width="13" height="22" viewBox="0 0 13 22" fill="none" stroke="#fff" strokeWidth="1.500"><path d="M7 1L1 11l6 10M12 1L6 11l6 10" /></svg>
            </PanelBtn>
            <Tooltip>Abrir panel de Collaborate</Tooltip>
          </DockRight>
        </Dock>
      </Content>

      <Taskbar>
        <TaskCell $w={36}><svg width="17" height="17" viewBox="0 0 17 17" fill="#fff"><path d="M0 2.500l7-1v6.500H0zM8 1.300L17 0v8H8zM0 9h7v6.500l-7-1zM8 9h9v8l-9-1.300z" /></svg></TaskCell>
        <TaskCell><S w={17} h={17} c="#fff" sw={1.300}><circle cx="10.500" cy="6.500" r="5.500" /><path d="M6.500 10.500L1 16" /></S></TaskCell>
        <TaskCell $w={35}><S w={16} h={16} c="#fff" sw={2}><circle cx="8" cy="8" r="6.500" /></S></TaskCell>
        <TaskCell $w={35}><S w={17} h={17} c="#fff" sw={1.100}><path d="M1 .5v2h11v-2M1 16.500v-2h11v2M1 5h11v7H1zM15 .5v2M15 5v2M15 9v7" /></S></TaskCell>
        <TaskGap />
        <TaskCell><svg width="17" height="16" viewBox="0 0 17 16"><path d="M0 1h6l2 2h9v13H0z" fill="#f5c85a" /><path d="M0 1h6l1.500 2H0z" fill="#d9a536" /><path d="M5 10h7v6h-2v-3H7v3H5z" fill="#2f8fd8" /></svg></TaskCell>
        <TaskCell $on $run><Brave s={15} /></TaskCell>
        <TaskCell><svg width="14" height="16" viewBox="0 0 14 16"><path d="M7 0l7 3.500v9L7 16 0 12.500v-9z" fill="#c9dff3" /><path d="M7 7.500V16L0 12.500v-9z" fill="#7fa6d6" /><path d="M7 0l7 3.500L7 7.500 0 3.500z" fill="#e8f1fa" /></svg></TaskCell>
        <TaskCell><svg width="17" height="17" viewBox="0 0 17 17"><circle cx="8.500" cy="8.500" r="8.500" fill="#6b3d8f" /><path d="M4 7c0-2 1-3 2-3 .8 0 1.500.5 2.500.5S10.200 4 11 4c1 0 2 1 2 3v3c0 1.500-1.500 2.500-4.500 2.500S4 11.500 4 10z" fill="#eee" /></svg></TaskCell>
        <TaskCell><svg width="17" height="17" viewBox="0 0 17 17"><path d="M12 0l5 2.500v12L12 17 4 10 1 12.500 0 12V5l1-.500L4 7z" fill="#1a8cd8" /><path d="M12 4.500v8L6.500 8.500z" fill="#101112" /></svg></TaskCell>
        <TaskCell><svg width="16" height="16" viewBox="0 0 16 16" fill="none"><rect width="16" height="16" rx="1" fill="#36749b" /><path d="M2 14c1-7 3-11 6-12 3 1 5 5 6 10M8 2c0 4-1 7-3 9" stroke="#143a52" strokeWidth="1" /></svg></TaskCell>
        <TaskCell><SquareApp $c="#2a7fff">IJ<i /></SquareApp></TaskCell>
        <TaskCell><svg width="16" height="16" viewBox="0 0 16 16"><rect width="16" height="16" rx="5" fill="#2d8cff" /><rect x="3" y="5" width="7" height="6" rx="1" fill="#fff" /><path d="M10.500 7l3-2v6l-3-2z" fill="#fff" /></svg></TaskCell>
        <TaskCell><SquareApp $c="#22c48a">CL<i /></SquareApp></TaskCell>
        <TaskCell><svg width="16" height="16" viewBox="0 0 16 16" fill="none" stroke="#777" strokeWidth="1.200"><circle cx="8" cy="8" r="7.300" fill="#2b2b2b" /><circle cx="8" cy="4.500" r="2" /><circle cx="4.800" cy="10" r="2" /><circle cx="11.200" cy="10" r="2" /></svg></TaskCell>
        <TaskCell><svg width="18" height="17" viewBox="0 0 18 17"><circle cx="13" cy="3" r="2.500" fill="#7b83eb" /><circle cx="8.500" cy="2.500" r="2.500" fill="#5059c9" /><rect x="8" y="5" width="10" height="9" rx="2" fill="#7b83eb" /><rect x="0" y="3.500" width="11" height="11" rx="1" fill="#4b53bc" /><path d="M2.500 6h6M5.500 6v6" stroke="#fff" strokeWidth="1.500" /></svg></TaskCell>
        <TaskCell $run><svg width="17" height="17" viewBox="0 0 17 17"><rect x="4" y="0" width="13" height="17" rx="1" fill="#21a366" /><path d="M10 0h7v8.500h-7z" fill="#33c481" /><path d="M10 8.500h7V17h-7z" fill="#107c41" /><rect x="0" y="4" width="10" height="10" rx="1" fill="#107c41" /><path d="M2.500 6.500l5 5M7.500 6.500l-5 5" stroke="#fff" strokeWidth="1.300" /></svg></TaskCell>
        <Tray>
          <TrayCell $w={24}><S w={13} h={8} c="#eee" sw={1.200}><path d="M1 7l5.500-6L12 7" /></S></TrayCell>
          <TrayCell $w={24}><svg width="12" height="18" viewBox="0 0 12 18"><rect x="3" y="0" width="6" height="12" rx="3" fill="#eee" /><path d="M1 8v1a5 5 0 0 0 10 0V8M6 14v3M3 17h6" fill="none" stroke="#eee" /></svg></TrayCell>
          <TrayCell $w={24}><svg width="15" height="16" viewBox="0 0 15 16"><circle cx="7" cy="7" r="7" fill="#1aa7a0" /><text x="7" y="10.500" textAnchor="middle" fontSize="10" fontWeight="700" fill="#fff" fontFamily="Liberation Sans">e</text><circle cx="11.500" cy="12.500" r="3" fill="#f0a020" /></svg></TrayCell>
          <TrayCell $w={24}><S w={17} h={13} c="#eee"><path d="M6.500 3.500h9v7h-9M15.500 5.500h1v3h-1M1 5h3.500v4H1zM2 5V2M3.500 5V2M4.500 7h2" /></S></TrayCell>
          <TrayCell $w={24}><S w={16} h={15} c="#eee"><path d="M3.500.5h12v9h-9M.5 3.500h4v7h-4zM2 10.500v3M9 9.500v4h-3h6" /></S></TrayCell>
          <TrayCell $w={19}><S w={16} h={14} c="#eee"><path d="M1 4.500h3l4-3.500v12l-4-3.500H1zM10 4.500c1 1.500 1 3.500 0 5M12.500 3c1.500 2 1.500 6 0 8" /></S></TrayCell>
          <TrayCell $w={45} $pl={2}>ESP</TrayCell>
          <TrayCell $w={31}>20:22</TrayCell>
          <TrayCell $w={40} $pl={10}><S w={16} h={15} c="#eee" sw={1.200}><path d="M.5.5h15v11h-5l-2.500 2.500-2.500-2.500h-5z" /></S></TrayCell>
        </Tray>
      </Taskbar>
    </Page>
  );
}
